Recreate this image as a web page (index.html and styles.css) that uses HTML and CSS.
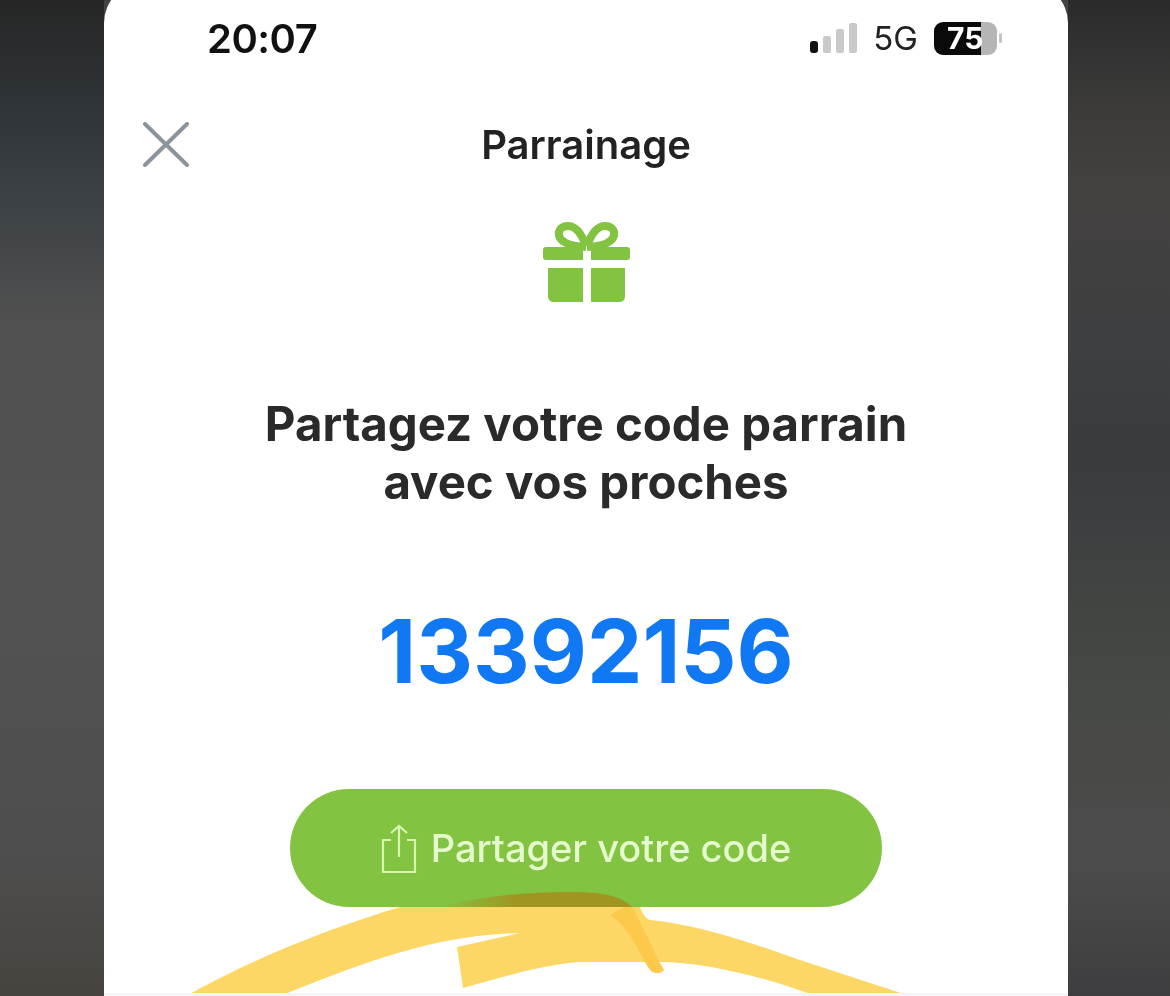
FILE: index.html
```html
<!DOCTYPE html>
<html lang="fr">
<head>
  <meta charset="UTF-8">
  <meta name="viewport" content="width=device-width, initial-scale=1.0">
  <title>Parrainage</title>
  <link rel="stylesheet" href="styles.css">
</head>
<body>
  <div class="side side-left"></div>

  <main class="phone">
    <div class="status-bar">
      <span class="time">20:07</span>
      <div class="status-icons">
        <div class="signal">
          <span class="bar bar-1"></span>
          <span class="bar bar-2"></span>
          <span class="bar bar-3"></span>
          <span class="bar bar-4"></span>
        </div>
        <span class="network">5G</span>
        <div class="battery">75</div>
        <span class="battery-tip"></span>
      </div>
    </div>

    <header class="nav">
      <svg class="close-icon" viewBox="0 0 46 45" width="46" height="45" aria-hidden="true">
        <path d="M2 2 L44 43 M44 2 L2 43" fill="none" stroke="#8b949c" stroke-width="4" stroke-linecap="round"/>
      </svg>
      <h1 class="nav-title">Parrainage</h1>
    </header>

    <svg class="gift-icon" viewBox="0 0 88 80" width="88" height="80" aria-hidden="true">
      <g fill="none" stroke="#82c341" stroke-width="8">
        <path d="M43 24 C38 10 32 4 25 4 C17 4 14 10 17 16 C20 21 28 24 43 25"/>
        <path d="M44 24 C49 10 55 4 62 4 C70 4 73 10 70 16 C67 21 59 24 44 25"/>
      </g>
      <path fill="#82c341" d="M3 25 H40 V38 H3 Q0 38 0 35 V28 Q0 25 3 25 Z M48 25 H84 Q87 25 87 28 V35 Q87 38 84 38 H48 Z"/>
      <path fill="#82c341" d="M5 46 H40 V80 H11 Q5 80 5 74 Z M48 46 H82 V74 Q82 80 76 80 H48 Z"/>
    </svg>

    <h2 class="headline">Partagez votre code parrain<br>avec vos proches</h2>

    <p class="code">13392156</p>

    <button class="share-button">
      <svg class="share-icon" viewBox="0 0 36 50" width="36" height="50" aria-hidden="true">
        <g fill="none" stroke="#d8f5b4" stroke-width="2.2">
          <path d="M10 16 H2 V48 H34 V16 H26"/>
          <path d="M18 33 V2 M10 9 L18 2 L26 9"/>
        </g>
      </svg>
      <span>Partager votre code</span>
    </button>

    <!-- trait de surligneur par dessus la capture -->
    <svg class="scribble" viewBox="0 0 964 1013" width="964" height="1013" aria-hidden="true">
      <defs>
        <linearGradient id="overlap" x1="0" x2="1" y1="0" y2="0">
          <stop offset="0" stop-color="#82c341"/>
          <stop offset="0.4" stop-color="#a0951f"/>
          <stop offset="1" stop-color="#a0951f"/>
        </linearGradient>
      </defs>
      <path fill="#fdd766" d="M82 1013 C150 975 226 945 296 924 L536 924 C540 934 543 936 546 937 C590 941 640 957 696 977 L806 1013 L711 1013 C656 992 596 979 556 979 L476 979 C436 982 396 995 359 1005 L353 964 L416 950 C336 952 270 975 176 1013 Z"/>
      <path fill="#fcc94a" d="M520 924 L528 924 C541 947 551 972 560 987 C556 992 548 990 546 987 C536 972 528 947 506 932 Z"/>
      <path fill="url(#overlap)" d="M336 924 C376 913 426 909 466 909 C496 909 516 912 528 924 Z"/>
    </svg>

    <div class="bottom-strip"></div>
  </main>

  <div class="side side-right"></div>
</body>
</html>
```

FILE: styles.css
```css
* {
  box-sizing: border-box;
}

html,
body {
  height: 100%;
}

body {
  margin: 0;
  display: flex;
  overflow: hidden;
  background-color: #444;
  font-family: Inter, 'Liberation Sans', sans-serif;
}

.side {
  height: 996px;
}

.side-left {
  flex: none;
  width: 104px;
  background: linear-gradient(#262626 0, #30363a 120px, #3a4044 190px, #505050 320px, #525252 600px, #4e4e4e 850px, #47443f 996px);
}

.side-right {
  flex: 1;
  background: linear-gradient(#2b2b2b 0, #3c3b3a 110px, #444140 190px, #3e3f41 340px, #383c3f 457px, #424442 600px, #474945 700px, #4c4c4c 857px, #3e3e40 996px);
}

.phone {
  position: relative;
  flex: none;
  width: 964px;
  height: 1013px;
  margin-top: -17px;
  display: flex;
  flex-direction: column;
  align-items: center;
  overflow: hidden;
  background: #fff;
  border-radius: 40px 40px 0 0;
}

.status-bar {
  width: 100%;
  height: 72px;
  margin-top: 19px;
  padding: 0 66px 0 103px;
  display: flex;
  align-items: center;
  justify-content: space-between;
  filter: blur(0.5px);
}

.time {
  font-size: 40px;
  font-weight: 600;
  color: #111;
  letter-spacing: -0.5px;
}

.status-icons {
  display: flex;
  align-items: center;
}

.signal {
  display: flex;
  align-items: flex-end;
  gap: 5px;
  height: 30px;
}

.bar {
  width: 8px;
  border-radius: 2px;
  background: #c9c9c9;
}

.bar-1 {
  height: 12px;
  background: #111;
  border-radius: 3px;
}

.bar-2 {
  height: 17px;
}

.bar-3 {
  height: 24px;
}

.bar-4 {
  height: 30px;
}

.network {
  margin-left: 16px;
  font-size: 33px;
  font-weight: 400;
  color: #222;
}

.battery {
  width: 63px;
  height: 33px;
  margin-left: 16px;
  padding-left: 13px;
  border-radius: 9px;
  background: linear-gradient(90deg, #0a0a0a 47px, #b5b5b5 47px);
  color: #fff;
  font-size: 30px;
  font-weight: 700;
  line-height: 33px;
}

.battery-tip {
  width: 3px;
  height: 10px;
  margin-left: 2px;
  border-radius: 2px;
  background: #c4c4c4;
}

.nav {
  position: relative;
  width: 100%;
  height: 70px;
  margin-top: 35px;
  display: flex;
  align-items: center;
  justify-content: center;
  filter: blur(0.5px);
}

.close-icon {
  position: absolute;
  left: 39px;
  top: 13px;
}

.nav-title {
  margin: 0;
  font-size: 40px;
  font-weight: 600;
  color: #222;
}

.gift-icon {
  flex: none;
  margin: 43px 0 0 2px;
  filter: blur(0.5px);
}

.headline {
  margin: 93px 0 0;
  font-size: 47.4px;
  font-weight: 700;
  line-height: 58px;
  color: #2a2a2a;
  text-align: center;
  filter: blur(0.4px);
}

.code {
  margin: 90px 0 0;
  font-size: 88px;
  font-weight: 700;
  line-height: 100px;
  color: #0f78f2;
  filter: blur(0.4px);
}

.share-button {
  flex: none;
  width: 592px;
  height: 118px;
  margin-top: 88px;
  padding: 0;
  display: flex;
  align-items: center;
  justify-content: center;
  gap: 14px;
  border: none;
  border-radius: 59px;
  background: #82c341;
  color: #e6fbcd;
  font-family: inherit;
  font-size: 38px;
  font-weight: 500;
}

.share-button span {
  filter: blur(0.5px);
}

.share-icon {
  margin-top: 2px;
}

.scribble {
  position: absolute;
  left: 0;
  top: 0;
  pointer-events: none;
}

.bottom-strip {
  position: absolute;
  left: 0;
  bottom: 0;
  width: 100%;
  height: 3px;
  background: #f5f5f8;
}
```
